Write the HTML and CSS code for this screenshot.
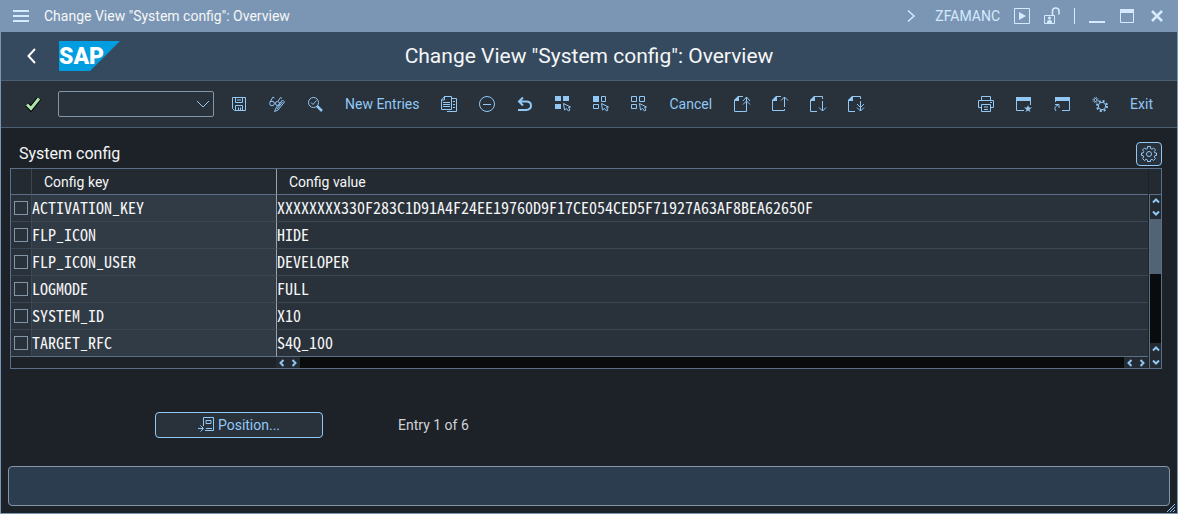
FILE: index.html
```html
<!DOCTYPE html>
<html lang="en">
<head>
<meta charset="utf-8">
<title>Change View "System config": Overview</title>
<link rel="stylesheet" href="styles.css">
</head>
<body>
<div class="window">
  <header class="titlebar">
    <button class="icon-btn" aria-label="Menu"><svg class="icon" viewBox="0 0 16 16"><path d="M0 3h16M0 8h16M0 13h16" stroke-width="2"/></svg></button>
    <span class="titlebar-text">Change View "System config": Overview</span>
    <div class="titlebar-tools">
      <button class="icon-btn" aria-label="Expand"><svg class="icon" viewBox="0 0 16 16"><path d="M5 2.500l6 5.500-6 5.500" stroke-width="1.500"/></svg></button>
      <span class="transaction">ZFAMANC</span>
      <button class="icon-btn" aria-label="Run"><svg class="icon" viewBox="0 0 16 16"><path d="M.5.5h15v15H.5z"/><path class="solid" d="M5 4l7 4-7 4z"/></svg></button>
      <button class="icon-btn" aria-label="Unlock"><svg class="icon" viewBox="0 0 16 16"><path d="M.5 7.500h10v8H.5z"/><path d="M8.500 7V3q0-3 3.200-3 3.300 0 3.300 3v3.500" stroke-width="1.500"/><circle class="solid" cx="5.500" cy="10" r="1.500"/><path class="solid" d="M3 15v-1q0-2 2.500-2T8 14v1z"/></svg></button>
      <span class="divider"></span>
      <button class="icon-btn" aria-label="Minimize"><svg class="icon" viewBox="0 0 16 16"><path d="M0 14h16" stroke-width="2"/></svg></button>
      <button class="icon-btn" aria-label="Maximize"><svg class="icon" viewBox="0 0 16 16"><path d="M1.500 1.500h13v13h-13z"/><path class="solid" d="M1 1h14v4H1z"/></svg></button>
      <button class="icon-btn" aria-label="Close"><svg class="icon" viewBox="0 0 16 16"><path d="M3 3l10 10M13 3L3 13" stroke-width="2.500"/></svg></button>
    </div>
  </header>

  <div class="shell">
    <div class="shell-left">
      <button class="icon-btn back" aria-label="Back"><svg class="icon" viewBox="0 0 16 16"><path d="M12 1L5.500 8l6.500 7" stroke-width="2"/></svg></button>
      <svg class="logo" viewBox="0 0 61 30" role="img" aria-label="SAP"><path d="M0 0h61L31 30H0z"/><text x="0" y="23">SAP</text></svg>
    </div>
    <h1>Change View "System config": Overview</h1>
  </div>

  <div class="toolbar">
    <div class="command">
      <button class="icon-btn" aria-label="Enter"><svg class="icon" viewBox="0 0 16 16"><path class="check-shadow" d="M2 8.500l4 4L14 2.500"/><path class="check" d="M2 8.500l4 4L14 2.500"/></svg></button>
      <div class="combo">
        <select aria-label="Command"><option></option></select>
        <svg class="combo-arrow" viewBox="0 0 14 8"><path d="M1 1l6 6 6-6"/></svg>
      </div>
    </div>
    <div class="actions">
      <button class="icon-btn" aria-label="Save"><svg class="icon" viewBox="0 0 16 16"><path d="M1.500 1.500h13v13h-11l-2-2zM4.500 2v4.500h7V2M4.500 14V9.500h7V14M7.500 14v-2.500M9.500 14v-2.500M6 4h4"/></svg></button>
      <button class="icon-btn" aria-label="Display or change"><svg class="icon" viewBox="0 0 16 16"><circle cx="3" cy="7.500" r="2.300"/><circle cx="8.500" cy="7.500" r="2"/><path d="M1 6l3-5 1.500 1M9 5l2.500-3.500L13 2.500M5.500 7h1"/><path d="M13.500 4L15.500 6 9 14l-3.500 1.500L7 12z"/><path d="M8 13l5.500-7"/></svg></button>
      <button class="icon-btn" aria-label="Find"><svg class="icon" viewBox="0 0 16 16"><circle cx="6.500" cy="6.500" r="5"/><path d="M4 6.500l2 2 3.500-4"/><path d="M10 10l5 5" stroke-width="2.500"/></svg></button>
      <button class="text-btn">New Entries</button>
      <button class="icon-btn" aria-label="Copy"><svg class="icon" viewBox="0 0 16 16"><path d="M3.500.5h7v13H.5V4zM3.500 0v4H0M11 2.500h4.500v13H6M2 6.500h7M2 8.500h7M2 10.500h7M12 5.500h2M12 8.500h2M12 11.500h2"/></svg></button>
      <button class="icon-btn" aria-label="Delete"><svg class="icon" viewBox="0 0 16 16"><circle cx="8" cy="8" r="7.500"/><path d="M4 8.500h8"/></svg></button>
      <button class="icon-btn" aria-label="Undo"><svg class="icon" viewBox="0 0 16 16"><path d="M6 1.500L2 5.500l4 4M2 5.500h7q5 0 5 4T9 14H1" stroke-width="2"/></svg></button>
      <button class="icon-btn" aria-label="Select all"><svg class="icon" viewBox="0 0 16 16"><path class="solid" d="M0 0h6v5H0zM8 0h6v5H8zM0 8h6v5H0z"/><path d="M8.500 7.500l1 6.500 2-1.500 2 2.500 1.500-1-1.500-2.500 2-.5z"/></svg></button>
      <button class="icon-btn" aria-label="Select block"><svg class="icon" viewBox="0 0 16 16"><path class="solid" d="M0 0h6v6H0z"/><path d="M8.500.5h4v5h-4zM.5 8.500h5v4h-5zM8.500 7.500l1 6.500 2-1.500 2 2.500 1.500-1-1.500-2.500 2-.5z"/></svg></button>
      <button class="icon-btn" aria-label="Deselect all"><svg class="icon" viewBox="0 0 16 16"><path d="M.5.500h5v5h-5zM8.500.5h5v5h-5zM.5 8.500h5v4h-5zM8.500 7.500l1 6.500 2-1.500 2 2.500 1.500-1-1.500-2.500 2-.5z"/></svg></button>
      <button class="text-btn">Cancel</button>
      <button class="icon-btn" aria-label="First page"><svg class="icon" viewBox="0 0 16 16"><path d="M9 .5H4.500l-4 4v11h12V13M12.500 13V1M9 5l3.500-4L16 5M9 8.500L12.500 5 16 8.500"/><path class="solid" d="M4 0h1v5H0V4z"/></svg></button>
      <button class="icon-btn" aria-label="Previous page"><svg class="icon" viewBox="0 0 16 16"><path d="M9 .5H4.500l-4 4v10h12V13M12.500 11V1M9 4.500L12.500 1 16 4.500"/><path class="solid" d="M4 0h1v5H0V4z"/></svg></button>
      <button class="icon-btn" aria-label="Next page"><svg class="icon" viewBox="0 0 16 16"><path d="M12.500 3V.5h-8l-4 4v11H7M12.500 5v10M9 11.500l3.500 3.500 3.500-3.500"/><path class="solid" d="M4 0h1v5H0V4z"/></svg></button>
      <button class="icon-btn" aria-label="Last page"><svg class="icon" viewBox="0 0 16 16"><path d="M12.500 3V.5h-8l-4 4v11H7M12.500 5v10M9 11.500l3.500 3.500 3.500-3.500M9 8l3.500 3.500L16 8"/><path class="solid" d="M4 0h1v5H0V4z"/></svg></button>
    </div>
    <div class="actions actions-end">
      <button class="icon-btn" aria-label="Print"><svg class="icon" viewBox="0 0 16 16"><path d="M3.500 4V.5h9V4M3.500 11.500h-3v-7h15v7h-3M3.500 8.500h9v7h-9zM6 11h4M6 13.500h4M12 6.500h2"/></svg></button>
      <button class="icon-btn" aria-label="Create session"><svg class="icon" viewBox="0 0 16 16"><path d="M8 14.500H.5V2M14.500 2v7"/><path class="solid" d="M0 1h15v4H0zM12 9l1 2.500h3l-2.500 2 1 2.500-2.500-1.500L9.500 16l1-2.500-2.500-2h3z"/></svg></button>
      <button class="icon-btn" aria-label="Create shortcut"><svg class="icon" viewBox="0 0 16 16"><path d="M8 14.500h7.500V2M1.500 2v4M2 15q-3-4 2-6M1 8.500h4V12"/><path class="solid" d="M1 1h15v4H1z"/></svg></button>
      <button class="icon-btn" aria-label="Customize layout"><svg class="icon" viewBox="0 0 16 16"><circle cx="3.500" cy="4" r="1.500"/><circle cx="3.500" cy="4" r="2.700" stroke-dasharray="1 1.120"/><circle cx="10" cy="10" r="3.700"/><circle cx="10" cy="10" r="5" stroke-dasharray="2 1.930" stroke-width="2"/></svg></button>
      <button class="text-btn">Exit</button>
    </div>
  </div>

  <main class="content">
    <section class="config">
      <div class="config-head">
        <h2>System config</h2>
        <button class="settings-btn" aria-label="Table settings"><svg class="icon" viewBox="0 0 16 16"><circle cx="8" cy="8" r="2.500"/><path d="M6.500.5h3v2l1.500.7L12.500 2l2 2-1.200 1.500.6 1.500h1.600v2.500h-1.600L13.200 11l1.300 1.500-2 2-1.500-1.200-1.500.7v1.500h-3V14L5 13.300l-1.500 1.200-2-2L2.700 11 2 9.500H.5V7h1.600l.6-1.500L1.500 4l2-2L5 3.200l1.500-.7z"/></svg></button>
      </div>
      <div class="grid">
        <table>
          <thead><tr><th class="col-check"></th><th class="col-key">Config key</th><th>Config value</th></tr></thead>
          <tbody>
            <tr><td><input type="checkbox" aria-label="Select ACTIVATION_KEY"></td><td class="key">ACTIVATION_KEY</td><td>XXXXXXXX330F283C1D91A4F24EE19760D9F17CE054CED5F71927A63AF8BEA62650F</td></tr>
            <tr><td><input type="checkbox" aria-label="Select FLP_ICON"></td><td class="key">FLP_ICON</td><td>HIDE</td></tr>
            <tr><td><input type="checkbox" aria-label="Select FLP_ICON_USER"></td><td class="key">FLP_ICON_USER</td><td>DEVELOPER</td></tr>
            <tr><td><input type="checkbox" aria-label="Select LOGMODE"></td><td class="key">LOGMODE</td><td>FULL</td></tr>
            <tr><td><input type="checkbox" aria-label="Select SYSTEM_ID"></td><td class="key">SYSTEM_ID</td><td>X10</td></tr>
            <tr><td><input type="checkbox" aria-label="Select TARGET_RFC"></td><td class="key">TARGET_RFC</td><td>S4Q_100</td></tr>
          </tbody>
        </table>
        <div class="side">
          <div class="side-head"></div>
          <div class="vscroll">
            <button aria-label="Scroll up"><svg viewBox="0 0 8 8"><path d="M1 5.500L4 2.500l3 3"/></svg></button>
            <button aria-label="Scroll down"><svg viewBox="0 0 8 8"><path d="M1 2.500l3 3 3-3"/></svg></button>
            <div class="track"><div class="thumb"></div></div>
            <button class="page-up" aria-label="Page up"><svg viewBox="0 0 8 8"><path d="M1 5.500L4 2.500l3 3"/></svg></button>
          </div>
        </div>
        <div class="hscroll">
          <div class="hscroll-fixed"></div>
          <button aria-label="Scroll left"><svg viewBox="0 0 8 8"><path d="M5.500 1l-3 3 3 3"/></svg></button>
          <button aria-label="Scroll right"><svg viewBox="0 0 8 8"><path d="M2.500 1l3 3-3 3"/></svg></button>
          <div class="track"></div>
          <button aria-label="Column left"><svg viewBox="0 0 8 8"><path d="M5.500 1l-3 3 3 3"/></svg></button>
          <button aria-label="Column right"><svg viewBox="0 0 8 8"><path d="M2.500 1l3 3-3 3"/></svg></button>
        </div>
        <div class="corner"><button aria-label="Page down"><svg viewBox="0 0 8 8"><path d="M1 2.500l3 3 3-3"/></svg></button></div>
      </div>
    </section>
    <div class="footer-row">
      <button class="position-btn"><svg class="icon" viewBox="0 0 16 16"><path d="M5.500 9V.5h10v13H7M8 3.500h5v3H8zM8 11.500h6M0 11.500h5M2.500 8.500l3 3-3 3"/></svg>Position...</button>
      <span class="entry">Entry 1 of 6</span>
    </div>
  </main>

  <footer class="status"><div class="status-bar" role="status"></div>
    <svg class="grip" viewBox="0 0 8 8"><path d="M0 8l8-8M3 8l5-5M6 8l2-2"/></svg>
  </footer>
</div>
</body>
</html>
```
FILE: styles.css
```css
* { box-sizing: border-box; }

:root {
  --accent: #91c8f6;
  --frame: #7b96b4;
  --line: #5b6f86;
  --thin: #3b4754;
  --page: #1d2228;
  --panel: #29313a;
  --text: #f5f6f7;
}

body {
  margin: 0;
  background: var(--page);
  color: var(--text);
  font: 14px/20px Roboto, "Liberation Sans", sans-serif;
}

h1, h2 { margin: 0; font-weight: 400; }

button {
  margin: 0;
  padding: 0;
  border: 0;
  background: none;
  color: var(--accent);
  font: inherit;
}

svg { display: block; fill: none; stroke: currentColor; }
.icon { width: 16px; height: 16px; flex: none; overflow: visible; }
.solid { fill: currentColor; stroke: none; }

.window {
  display: flex;
  flex-direction: column;
  min-height: 100vh;
  border: 1px solid var(--frame);
  border-top: 0;
}

.titlebar {
  display: flex;
  align-items: center;
  gap: 15px;
  height: 32px;
  padding: 0 12px;
  background: var(--frame);
}
.titlebar .icon-btn { color: #d5eaff; }
.titlebar-tools { display: flex; align-items: center; gap: 14px; margin-left: auto; }
.transaction { margin-left: 2px; color: #d5eaff; }
.divider { width: 1px; height: 16px; background: #d5eaff; }

.shell {
  display: grid;
  grid-template-columns: 1fr auto 1fr;
  align-items: center;
  height: 49px;
  padding: 0 22px;
  background: #354a5f;
  border-bottom: 1px solid #4d5f73;
}
.shell-left { display: flex; align-items: center; gap: 20px; }
.back { color: #fff; }
.shell h1 { font-size: 21px; line-height: 28px; }
.logo { width: 61px; height: 30px; stroke: none; fill: #009de0; }
.logo text { fill: #fff; font: 900 23px Roboto, sans-serif; }

.toolbar {
  display: flex;
  align-items: center;
  gap: 17px;
  height: 47px;
  padding: 0 24px;
  background: var(--panel);
  border-bottom: 1px solid #4d5f73;
}
.command { display: flex; align-items: center; gap: 17px; }
.check-shadow { stroke: #000; stroke-width: 5; }
.check { stroke: #abe2ab; stroke-width: 3; }
.combo { display: grid; align-items: center; width: 156px; }
.combo select {
  grid-area: 1 / 1;
  width: 100%;
  height: 26px;
  padding: 0 24px 0 8px;
  appearance: none;
  background: var(--panel);
  border: 1px solid #8396a8;
  border-radius: 2px;
  color: var(--text);
  font: inherit;
}
.combo-arrow { grid-area: 1 / 1; justify-self: end; width: 14px; height: 8px; margin-right: 4px; color: var(--accent); pointer-events: none; }
.actions { display: flex; align-items: center; gap: 22px; }
.actions-end { margin-left: auto; }
.text-btn { white-space: nowrap; }

.content { flex: 1; padding: 14px 15px 0 9px; }
.config-head { display: flex; align-items: flex-start; justify-content: space-between; height: 26px; padding-left: 9px; }
.config-head h2 { font-size: 16px; line-height: 24px; }
.settings-btn {
  display: grid;
  place-items: center;
  width: 26px;
  height: 24px;
  background: var(--panel);
  border: 1px solid var(--accent);
  border-radius: 4px;
}

.grid {
  display: grid;
  grid-template-columns: 1fr 13px;
  border: 1px solid var(--line);
}
table { width: 100%; border-collapse: separate; border-spacing: 0; table-layout: fixed; background: var(--panel); }
th {
  height: 26px;
  padding: 0 12px;
  background: #232a31;
  border-bottom: 1px solid var(--line);
  font-weight: 400;
  text-align: left;
}
td {
  height: 27px;
  padding: 0 0 2px;
  border-bottom: 1px solid var(--thin);
  font: 16px/20px "Noto Sans Mono CJK SC", "Noto Sans Mono CJK JP", "DejaVu Sans Mono", monospace;
  white-space: nowrap;
}
tr:last-child td { border-bottom-color: var(--line); }
th:first-child, td:first-child { width: 21px; padding: 0; border-right: 1px solid var(--thin); }
.col-key { width: 245px; }
.col-key, .key { border-right: 1px solid #a0a0a0; }
.key { background: #313b45; }
td input {
  display: block;
  width: 14px;
  height: 14px;
  margin: 0 0 0 3px;
  appearance: none;
  border: 1px solid #8396a8;
}

.side { display: flex; flex-direction: column; padding-left: 1px; }
.side-head { height: 25px; background: #232a31; }
.vscroll { display: flex; flex: 1; flex-direction: column; border-top: 1px solid var(--line); border-left: 1px solid var(--line); }
.grid button { display: grid; flex: none; place-items: center; width: 12px; height: 12px; background: #232a31; }
.grid button svg { width: 8px; height: 8px; stroke-width: 2; }
.grid .vscroll button { width: 11px; }
.grid .vscroll .page-up { height: 14px; padding-bottom: 2px; }
.track { flex: 1; background: #090b0d; }
.thumb { width: 100%; height: 44%; background: #536376; }
.hscroll { display: flex; height: 11px; }
.hscroll .track { height: 11px; }
.hscroll-fixed { width: 265px; }
.grid .hscroll button { height: 11px; }
.corner { padding-left: 1px; }
.grid .corner button { width: 12px; height: 11px; padding-bottom: 2px; border-left: 1px solid var(--line); }

.footer-row { display: flex; align-items: center; gap: 75px; padding: 43px 0 0 145px; }
.position-btn {
  display: flex;
  align-items: center;
  justify-content: center;
  gap: 4px;
  width: 168px;
  height: 26px;
  background: var(--panel);
  border: 1px solid var(--accent);
  border-radius: 4px;
}
.entry { color: #d0d3d6; }

.status { position: relative; padding: 0 7px 7px; }
.status-bar { height: 40px; background: #2c3d4f; border: 1px solid #8396a8; border-radius: 4px; }
.grip { position: absolute; right: 2px; bottom: 1px; width: 8px; height: 8px; color: var(--accent); }
```
